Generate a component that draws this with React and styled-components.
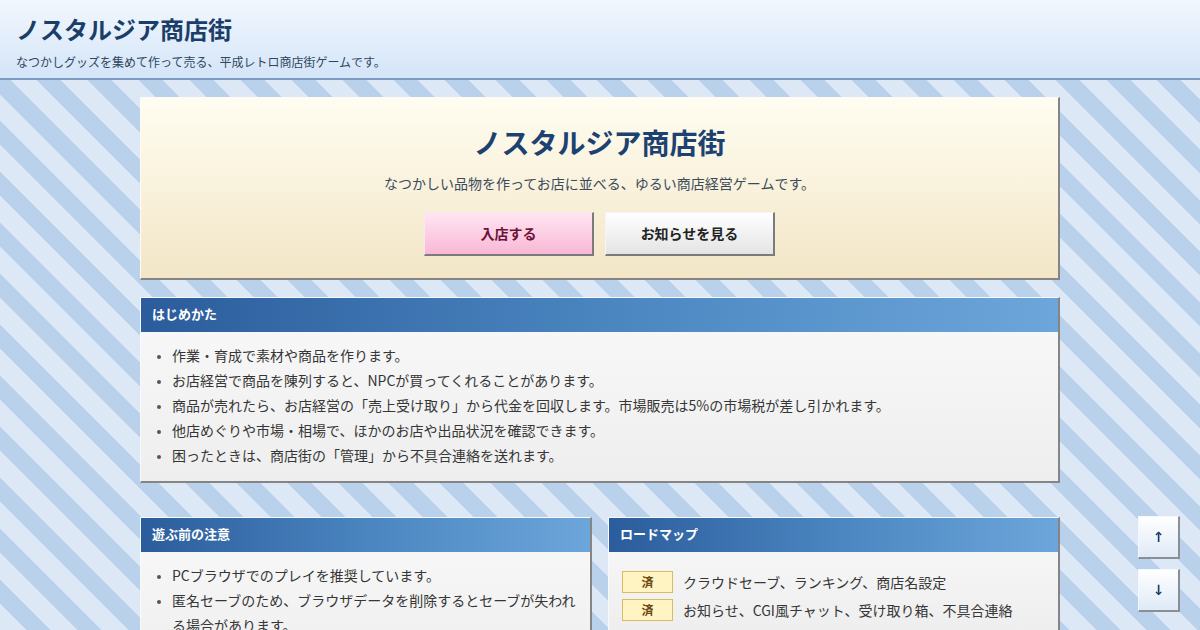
import React from 'react';
import styled, { createGlobalStyle } from 'styled-components';

const GlobalStyle = createGlobalStyle`
  html, body {
    margin: 0;
    padding: 0;
  }
  body {
    font-family: "Noto Sans CJK JP", "Noto Sans", sans-serif;
    color: #333;
    background: repeating-linear-gradient(
      45deg,
      #dce8f5 0px,
      #dce8f5 19px,
      #b9d1ea 19px,
      #b9d1ea 36px
    );
    background-attachment: fixed;
    min-height: 100vh;
  }
`;

const SiteHeader = styled.header`
  background: linear-gradient(to bottom, #f1f7fe, #d4e5f8);
  border-bottom: 2px solid #7c9bc3;
  padding: 13px 16px 7px;
`;

const SiteTitle = styled.h1`
  margin: 0;
  font-size: 24px;
  line-height: 32px;
  font-weight: 700;
  color: #1b3e69;
`;

const SiteTagline = styled.p`
  margin: 8px 0 0;
  font-size: 12px;
  line-height: 18px;
  color: #2f4660;
`;

const Main = styled.main`
  width: 920px;
  margin: 0 auto;
  padding: 17px 0 40px;
  display: flex;
  flex-direction: column;
`;

const Hero = styled.section`
  background: linear-gradient(to bottom, #fffdf1, #f3e6c7);
  border: 1px solid #fdfbf3;
  border-right: 2px solid #858585;
  border-bottom: 2px solid #858585;
  padding: 26px 20px 22px;
  text-align: center;
`;

const HeroTitle = styled.h2`
  margin: 0;
  font-size: 28px;
  line-height: 36px;
  font-weight: 700;
  color: #1c4272;
`;

const HeroLead = styled.p`
  margin: 13px 0 0;
  font-size: 14px;
  line-height: 20px;
  color: #3b4b5c;
`;

const ButtonRow = styled.div`
  margin-top: 19px;
  display: flex;
  justify-content: center;
  gap: 11px;
`;

const Button = styled.button`
  width: 170px;
  height: 44px;
  padding: 0 0 1px;
  font-family: inherit;
  font-size: 14px;
  font-weight: 700;
  cursor: pointer;
  border: 1px solid ${p => (p.pink ? '#fbe6ef' : '#f4f4f4')};
  border-right: 2px solid #7b7b7b;
  border-bottom: 2px solid #7b7b7b;
  color: ${p => (p.pink ? '#6a1238' : '#222')};
  background: ${p =>
    p.pink
      ? 'linear-gradient(to bottom, #ffe6f2, #f9b7d6)'
      : 'linear-gradient(to bottom, #ffffff, #e4e4e4)'};
`;

const Panel = styled.section`
  margin-top: ${p => p.gap || 0}px;
  border: 1px solid #f6f9fd;
  border-right: 2px solid #858585;
  border-bottom: 2px solid #858585;
  background: linear-gradient(to bottom, #f9f9f9, #eeeeee);
  overflow: hidden;
`;

const PanelHead = styled.h3`
  margin: 0;
  height: 34px;
  padding: 0 11px 3px;
  box-sizing: border-box;
  display: flex;
  align-items: center;
  font-size: 13px;
  font-weight: 700;
  color: #fff;
  background: linear-gradient(to right, #2b5c9b, #4a85c0 50%, #6ca6da);
`;

const List = styled.ul`
  margin: 0;
  padding: 11px 8px 13px 31px;
  font-size: 14px;
  line-height: 25px;
  color: #363636;
  li::marker {
    font-size: 11px;
    color: #555;
  }
`;

const Columns = styled.div`
  margin-top: 34px;
  display: grid;
  grid-template-columns: 1fr 1fr;
  gap: 16px;
  align-items: start;
`;

const Roadmap = styled.div`
  padding: 19px 13px 12px;
  display: flex;
  flex-direction: column;
  gap: 6px;
`;

const RoadRow = styled.div`
  display: flex;
  align-items: center;
  gap: 10px;
  font-size: 14px;
  line-height: 22px;
  color: #363636;
`;

const Badge = styled.span`
  width: 49px;
  height: 20px;
  flex: none;
  display: flex;
  align-items: center;
  justify-content: center;
  background: #fff4c2;
  border: 1px solid #d7bc62;
  font-size: 12px;
  font-weight: 700;
  color: #6a4a12;
`;

const ScrollDock = styled.div`
  position: fixed;
  right: 20px;
  bottom: 18px;
  display: flex;
  flex-direction: column;
  gap: 10px;
`;

const ScrollButton = styled.button`
  width: 42px;
  height: 43px;
  padding: 0;
  font-family: "DejaVu Sans", sans-serif;
  font-size: 14px;
  font-weight: 700;
  color: #1b3e69;
  cursor: pointer;
  background: linear-gradient(to bottom, #ffffff, #dfeaf7);
  border: 1px solid #f4f8fd;
  border-right: 2px solid #8a8f96;
  border-bottom: 2px solid #8a8f96;
`;

const howTo = [
  '作業・育成で素材や商品を作ります。',
  'お店経営で商品を陳列すると、NPCが買ってくれることがあります。',
  '商品が売れたら、お店経営の「売上受け取り」から代金を回収します。市場販売は5%の市場税が差し引かれます。',
  '他店めぐりや市場・相場で、ほかのお店や出品状況を確認できます。',
  '困ったときは、商店街の「管理」から不具合連絡を送れます。',
];

const notes = [
  'PCブラウザでのプレイを推奨しています。',
  '匿名セーブのため、ブラウザデータを削除するとセーブが失われる場合があります。',
  'ゲーム内の通貨や品物は現実の価値とは関係ありません。',
];

const roadmap = [
  { state: '済', text: 'クラウドセーブ、ランキング、商店名設定' },
  { state: '済', text: 'お知らせ、CGI風チャット、受け取り箱、不具合連絡' },
];

export default function App() {
  return (
    <>
      <GlobalStyle />
      <SiteHeader>
        <SiteTitle>ノスタルジア商店街</SiteTitle>
        <SiteTagline>なつかしグッズを集めて作って売る、平成レトロ商店街ゲームです。</SiteTagline>
      </SiteHeader>
      <Main>
        <Hero>
          <HeroTitle>ノスタルジア商店街</HeroTitle>
          <HeroLead>なつかしい品物を作ってお店に並べる、ゆるい商店経営ゲームです。</HeroLead>
          <ButtonRow>
            <Button pink>入店する</Button>
            <Button>お知らせを見る</Button>
          </ButtonRow>
        </Hero>

        <Panel gap={17}>
          <PanelHead>はじめかた</PanelHead>
          <List>
            {howTo.map(t => (
              <li key={t}>{t}</li>
            ))}
          </List>
        </Panel>

        <Columns>
          <Panel>
            <PanelHead>遊ぶ前の注意</PanelHead>
            <List>
              {notes.map(t => (
                <li key={t}>{t}</li>
              ))}
            </List>
          </Panel>
          <Panel>
            <PanelHead>ロードマップ</PanelHead>
            <Roadmap>
              {roadmap.map(r => (
                <RoadRow key={r.text}>
                  <Badge>{r.state}</Badge>
                  {r.text}
                </RoadRow>
              ))}
            </Roadmap>
          </Panel>
        </Columns>
      </Main>
      <ScrollDock>
        <ScrollButton aria-label="上へ">↑</ScrollButton>
        <ScrollButton aria-label="下へ">↓</ScrollButton>
      </ScrollDock>
    </>
  );
}
